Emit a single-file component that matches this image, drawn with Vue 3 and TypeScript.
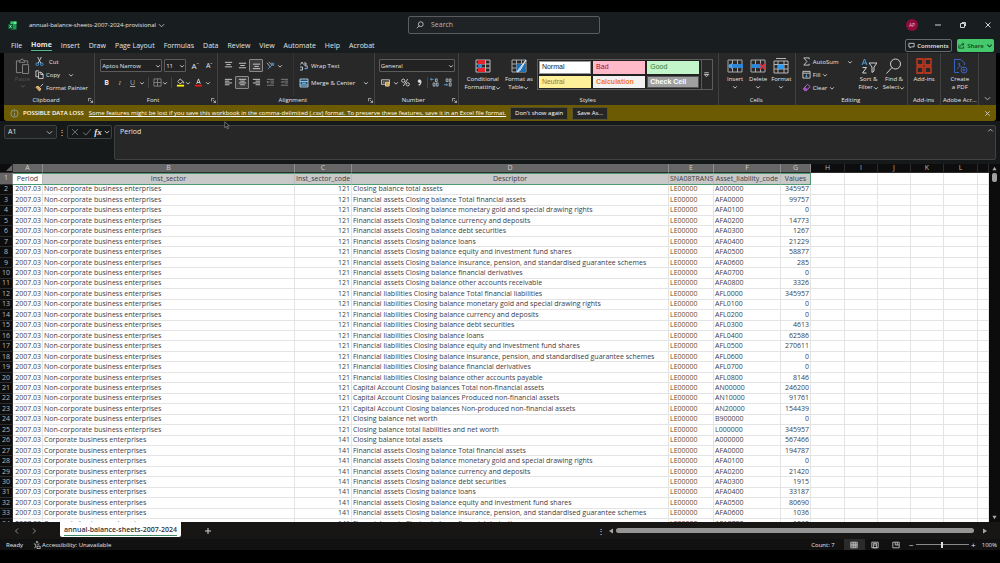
<script setup lang="ts">
import { ref } from 'vue'

interface Row {
  sector: string
  code: number
  text: string
  account: string
  value: number
}

const menus: string[] = ['File', 'Home', 'Insert', 'Draw', 'Page Layout', 'Formulas', 'Data', 'Review', 'View', 'Automate', 'Help', 'Acrobat']
const styles: string[] = ['Normal', 'Bad', 'Good', 'Neutral', 'Calculation', 'Check Cell']
const columns: string[] = ['A', 'B', 'C', 'D', 'E', 'F', 'G', 'H', 'I', 'J', 'K', 'L', '']
const headings: string[] = ['Period', 'Inst_sector', 'Inst_sector_code', 'Descriptor', 'SNA08TRANS', 'Asset_liability_code', 'Values']
const blanks = 6

const entries: [string, string, number][] = [
  ['Closing balance total assets', 'A000000', 345957],
  ['Financial assets Closing balance Total financial assets', 'AFA0000', 99757],
  ['Financial assets Closing balance monetary gold and special drawing rights', 'AFA0100', 0],
  ['Financial assets Closing balance currency and deposits', 'AFA0200', 14773],
  ['Financial assets Closing balance debt securities', 'AFA0300', 1267],
  ['Financial assets Closing balance loans', 'AFA0400', 21229],
  ['Financial assets Closing balance equity and investment fund shares', 'AFA0500', 58877],
  ['Financial assets Closing balance insurance, pension, and standardised guarantee schemes', 'AFA0600', 285],
  ['Financial assets Closing balance financial derivatives', 'AFA0700', 0],
  ['Financial assets Closing balance other accounts receivable', 'AFA0800', 3326],
  ['Financial liabilities Closing balance Total financial liabilities', 'AFL0000', 345957],
  ['Financial liabilities Closing balance monetary gold and special drawing rights', 'AFL0100', 0],
  ['Financial liabilities Closing balance currency and deposits', 'AFL0200', 0],
  ['Financial liabilities Closing balance debt securities', 'AFL0300', 4613],
  ['Financial liabilities Closing balance loans', 'AFL0400', 62586],
  ['Financial liabilities Closing balance equity and investment fund shares', 'AFL0500', 270611],
  ['Financial liabilities Closing balance insurance, pension, and standardised guarantee schemes', 'AFL0600', 0],
  ['Financial liabilities Closing balance financial derivatives', 'AFL0700', 0],
  ['Financial liabilities Closing balance other accounts payable', 'AFL0800', 8146],
  ['Capital Account Closing balances Total non-financial assets', 'AN00000', 246200],
  ['Capital Account Closing balances Produced non-financial assets', 'AN10000', 91761],
  ['Capital Account Closing balances Non-produced non-financial assets', 'AN20000', 154439],
  ['Closing balance net worth', 'B900000', 0],
  ['Closing balance total liabilities and net worth', 'L000000', 345957],
]
const corporateValues: number[] = [567466, 194787, 0, 21420, 1915, 33187, 80690, 1036, 1060]

const rows: Row[] = [
  ...entries.map(([text, account, value]) => ({ sector: 'Non-corporate business enterprises', code: 121, text, account, value })),
  ...corporateValues.map((value, i) => ({ sector: 'Corporate business enterprises', code: 141, text: entries[i][0], account: entries[i][1], value })),
]

const activeMenu = ref('Home')
const font = ref('Aptos Narrow')
const size = ref('11')
const format = ref('General')
const zoom = ref(50)
const showWarning = ref(true)
</script>

<template>
  <div class="app">
    <header class="title">
      <div class="doc">
        <svg class="logo" viewBox="0 0 18 18"><path d="M5 1h12v16H5z" fill="#1f9a55" stroke="none" /><path d="M11 1h6v5h-6z" fill="#6fe79a" stroke="none" /><path d="M5 1h6v5H5z" fill="#2fc46d" stroke="none" /><path d="M0 6h10v10H0z" fill="#0c5c33" stroke="none" /><path d="M3 8.500l4 5M7 8.500l-4 5" stroke="#d9ffe6" stroke-width="1.500" /></svg>
        <h1>annual-balance-sheets-2007-2024-provisional</h1>
        <svg class="chev big" viewBox="0 0 8 8"><path d="M1 2.500l3 3 3-3" /></svg>
      </div>
      <label class="search">
        <svg viewBox="0 0 10 10"><circle cx="6" cy="4" r="3" /><path d="M4 6L1 9" /></svg>
        <input type="text" placeholder="Search" aria-label="Search" />
      </label>
      <div class="window">
        <span class="avatar">AP</span>
        <button aria-label="Minimise"><svg viewBox="0 0 8 8"><path d="M1 4h6" /></svg></button>
        <button aria-label="Restore"><svg viewBox="0 0 8 8"><path d="M1.500 2.500h4v4h-4zM3 1.500h3.500V5" /></svg></button>
        <button aria-label="Close"><svg viewBox="0 0 8 8"><path d="M1.500 1.500l5 5M6.500 1.500l-5 5" /></svg></button>
      </div>
    </header>

    <nav class="menu">
      <button v-for="m in menus" :key="m" :class="{ on: m === activeMenu }" @click="activeMenu = m">{{ m }}</button>
      <span class="spring"></span>
      <button class="comments"><svg viewBox="0 0 8 8"><path d="M1 1.500h6v4H4L2.500 7V5.500H1z" /></svg>Comments</button>
      <button class="share"><svg viewBox="0 0 8 8"><path d="M1 3v4h5.500V5M3 5c0-2 1-2.500 3-2.500M5 1l2 1.500L5 4" /></svg>Share<svg class="chev" viewBox="0 0 8 8"><path d="M1.500 3l2.500 2.500L6.500 3" /></svg></button>
    </nav>

    <section class="ribbon">
      <div class="group g-clip">
        <div class="body clip">
          <button class="paste">
            <svg viewBox="0 0 16 18"><path d="M4 3H1.500v12.500H7M11 3h2.500v3M4.500 4.500v-2H6c0-2 3-2 3 0h1.500v2zM8 7h6.500v9.500H8z" /></svg>
            <span>Paste</span>
            <svg class="chev" viewBox="0 0 8 8"><path d="M1.500 3l2.500 2.500L6.500 3" /></svg>
          </button>
          <div class="list">
            <button class="cut"><svg viewBox="0 0 10 10"><path d="M3 0l3.500 7M7 0L3.500 7" /><g stroke="#4a9ee0"><circle cx="2.500" cy="8" r="1.500" /><circle cx="7.500" cy="8" r="1.500" /></g></svg>Cut</button>
            <button><svg viewBox="0 0 10 10"><path d="M4 7.500H1V1h3.500M4 2.500h3L9 4.500v5H4zM6.500 2.500v2.500H9" /></svg>Copy<svg class="chev gap" viewBox="0 0 8 8"><path d="M1.500 3l2.500 2.500L6.500 3" /></svg></button>
            <button><svg viewBox="0 0 10 10"><path d="M9 1L6 4M3.500 3.500l3 3" /><path d="M3.500 3.500L1 4.500 5 9l1.500-2.500z" fill="#e6a24a" stroke="#e8c08a" /></svg>Format Painter</button>
          </div>
        </div>
        <footer><span>Clipboard</span><svg class="launch" viewBox="0 0 6 6"><path d="M.5 4V.5H4M2.500 2.500l3 3M5.500 3v2.500H3" /></svg></footer>
      </div>

      <div class="group g-font">
        <div class="body rows2">
          <div class="line">
            <span class="pick w62"><select v-model="font" aria-label="Font"><option>Aptos Narrow</option></select><svg class="chev" viewBox="0 0 8 8"><path d="M1.500 3l2.500 2.500L6.500 3" /></svg></span>
            <span class="pick w22"><select v-model="size" aria-label="Font size"><option>11</option></select><svg class="chev" viewBox="0 0 8 8"><path d="M1.500 3l2.500 2.500L6.500 3" /></svg></span>
            <button class="cell w14 grow" aria-label="Increase font size">A<sup>ˆ</sup></button>
            <button class="cell w14 shrink" aria-label="Decrease font size">A<sup>ˇ</sup></button>
          </div>
          <div class="line">
            <button class="cell w13 bold">B</button>
            <button class="cell w13 ital">I</button>
            <button class="cell w13 under">U</button>
            <svg class="chev" viewBox="0 0 8 8"><path d="M1.500 3l2.500 2.500L6.500 3" /></svg>
            <i class="bar"></i>
            <button class="cell w10" aria-label="Borders"><svg viewBox="0 0 10 10" class="dim"><path d="M1 1h8v8H1zM5 1v8M1 5h8" /></svg></button>
            <svg class="chev" viewBox="0 0 8 8"><path d="M1.500 3l2.500 2.500L6.500 3" /></svg>
            <i class="bar"></i>
            <button class="cell w10" aria-label="Fill colour"><svg viewBox="0 0 10 10"><path d="M4.500 1L8 4 4.500 6.500 2 4zM8.500 4v2" /><path d="M1 7.500h8v2H1z" fill="#fff200" stroke="none" /></svg></button>
            <svg class="chev" viewBox="0 0 8 8"><path d="M1.500 3l2.500 2.500L6.500 3" /></svg>
            <button class="cell w14" aria-label="Font colour"><svg viewBox="0 0 10 10"><path d="M3 6.500L5 1l2 5.500M3.500 5h3" /><path d="M1 7.500h8v2H1z" fill="#f01414" stroke="none" /></svg></button>
            <svg class="chev" viewBox="0 0 8 8"><path d="M1.500 3l2.500 2.500L6.500 3" /></svg>
          </div>
        </div>
        <footer><span>Font</span><svg class="launch" viewBox="0 0 6 6"><path d="M.5 4V.5H4M2.500 2.500l3 3M5.500 3v2.500H3" /></svg></footer>
      </div>

      <div class="group g-align">
        <div class="body align">
          <div class="rows2">
            <div class="line">
              <button class="cell w14" aria-label="Top align"><svg viewBox="0 0 10 10"><path d="M1 1.500h8M2.500 4h5M1 6.500h8" /></svg></button>
              <button class="cell w14" aria-label="Middle align"><svg viewBox="0 0 10 10"><path d="M1 2.500h8M2.500 5h5M1 7.500h8" /></svg></button>
              <button class="cell w14 sel" aria-label="Bottom align"><svg viewBox="0 0 10 10"><path d="M1 3.500h8M2.500 6h5M1 8.500h8" /></svg></button>
              <button class="cell w14" aria-label="Orientation"><svg viewBox="0 0 10 10"><path d="M1 2l4 5M3 1l4 4" stroke="#9fb4c4" /><path d="M2 9l6-6M5.500 2.500H8.500V5.500" stroke="#5b9bd0" /></svg></button>
              <svg class="chev" viewBox="0 0 8 8"><path d="M1.500 3l2.500 2.500L6.500 3" /></svg>
            </div>
            <div class="line">
              <button class="cell w14" aria-label="Align left"><svg viewBox="0 0 10 10"><path d="M1 1.500h8M1 3.500h5M1 5.500h8M1 7.500h5" /></svg></button>
              <button class="cell w14 sel" aria-label="Centre"><svg viewBox="0 0 10 10"><path d="M1 1.500h8M2.500 3.500h5M1 5.500h8M2.500 7.500h5" /></svg></button>
              <button class="cell w14" aria-label="Align right"><svg viewBox="0 0 10 10"><path d="M1 1.500h8M4 3.500h5M1 5.500h8M4 7.500h5" /></svg></button>
              <button class="cell w14" aria-label="Decrease indent"><svg viewBox="0 0 10 10" class="dim"><path d="M1 1.500h8M5 3.500h4M5 5.500h4M1 8h8M4 4.500H1M2 3.500l-1 1 1 1" /></svg></button>
              <button class="cell w14" aria-label="Increase indent"><svg viewBox="0 0 10 10" class="dim"><path d="M1 1.500h8M5 3.500h4M5 5.500h4M1 8h8M1 4.500h3M3 3.500l1 1-1 1" /></svg></button>
            </div>
          </div>
          <div class="rows2 wrap">
            <button class="line txt"><svg viewBox="0 0 10 10"><path d="M1.500 3.500L3 1l1.500 2.500M1 6h2.500v3H1M6 1v4h2M8 3H6" stroke="#b8c4cc" /><path d="M6 7.500h2.500V4.500M7 6.500l-1 1 1 1" stroke="#5b9bd0" /></svg>Wrap Text</button>
            <button class="line txt"><svg viewBox="0 0 10 10"><path d="M1 1h8v8H1z" fill="#23506f" stroke="#a8bccb" /><path d="M1 3.500h8M1 7h8M3 5.200h4" stroke="#8fc1e6" /></svg>Merge &amp; Center<svg class="chev gap" viewBox="0 0 8 8"><path d="M1.500 3l2.500 2.500L6.500 3" /></svg></button>
          </div>
        </div>
        <footer><span>Alignment</span><svg class="launch" viewBox="0 0 6 6"><path d="M.5 4V.5H4M2.500 2.500l3 3M5.500 3v2.500H3" /></svg></footer>
      </div>

      <div class="group g-num">
        <div class="body rows2">
          <div class="line">
            <span class="pick w76"><select v-model="format" aria-label="Number format"><option>General</option></select><svg class="chev" viewBox="0 0 8 8"><path d="M1.500 3l2.500 2.500L6.500 3" /></svg></span>
          </div>
          <div class="line">
            <button class="cell w14" aria-label="Accounting format"><svg viewBox="0 0 10 10"><path d="M.5 2h9v5h-9zM2 4.500h2" /><path d="M5 4.500h4v4.500H5z" fill="#caa35a" stroke="#e5c98c" /></svg></button>
            <svg class="chev" viewBox="0 0 8 8"><path d="M1.500 3l2.500 2.500L6.500 3" /></svg>
            <button class="cell w14" aria-label="Percent style"><svg viewBox="0 0 10 10"><circle cx="2.500" cy="3" r="1.800" /><circle cx="7.500" cy="7" r="1.800" /><path d="M7.500 1L2.500 9" /></svg></button>
            <button class="cell w14" aria-label="Comma style"><svg viewBox="0 0 10 10"><circle cx="5" cy="3.500" r="1.500" fill="#e8e8e8" /><path d="M6.500 3.500C6.500 6 5.500 7.500 4 8" stroke-width="1.500" /></svg></button>
            <i class="bar"></i>
            <button class="cell w13" aria-label="Increase decimal"><svg viewBox="0 0 10 10"><path d="M4 1.500H.5M2 .5l-1.500 1 1.500 1" stroke="#5b9bd0" /><path d="M6 1h2v3H6zM3.500 5.500h2V9h-2zM7 5.500h2V9H7z" stroke="#a9bac6" /></svg></button>
            <button class="cell w13" aria-label="Decrease decimal"><svg viewBox="0 0 10 10"><path d="M1 7.500h4M3.500 6.500l1.500 1-1.500 1" stroke="#5b9bd0" /><path d="M3.500 1h2v3h-2zM7 1h2v3H7zM7 5.500h2V9H7z" stroke="#a9bac6" /></svg></button>
          </div>
        </div>
        <footer><span>Number</span><svg class="launch" viewBox="0 0 6 6"><path d="M.5 4V.5H4M2.500 2.500l3 3M5.500 3v2.500H3" /></svg></footer>
      </div>

      <div class="group g-style">
        <div class="body styles">
          <button class="tall w36"><svg viewBox="0 0 16 16"><path d="M1 2h14v12H1zM1 6h14M1 10h14M5.500 2v12M10.500 2v12" stroke="#b9b9b9" /><path d="M3 2h7v4H3zM3 10h7v4H3z" fill="#e8252f" stroke="none" /><path d="M3 6.500h4v3H3z" fill="#2f86d6" stroke="none" /></svg><span>Conditional</span><span>Formatting<svg class="chev" viewBox="0 0 8 8"><path d="M1.500 3l2.500 2.500L6.500 3" /></svg></span></button>
          <button class="tall w36"><svg viewBox="0 0 16 16"><path d="M1 2h14v12H1zM1 6h14M1 10h14M5.500 2v12M10.500 2v12" stroke="#a9a9a9" /><path d="M5.500 6h9v8h-9z" fill="#1f6fb5" stroke="none" /><path d="M15 2L8 11l-2 3 3-1.500z" fill="#6db6ee" stroke="#d8e8f4" /></svg><span>Format as</span><span>Table<svg class="chev" viewBox="0 0 8 8"><path d="M1.500 3l2.500 2.500L6.500 3" /></svg></span></button>
          <div class="gallery">
            <div class="swatches"><button v-for="s in styles" :key="s" :class="s.toLowerCase().replace(' ', '-')">{{ s }}</button></div>
            <button class="more" aria-label="More styles"><svg viewBox="0 0 8 8"><path d="M1.500 2h5M1.500 4l2.500 2.500L6.500 4z" /></svg></button>
          </div>
        </div>
        <footer><span>Styles</span></footer>
      </div>

      <div class="group g-cells">
        <div class="body trio">
          <button class="tall"><svg viewBox="0 0 16 16"><path d="M1 2h14v12H1zM5.500 2v12M10.500 2v12" stroke="#a9a9a9" /><path d="M2 6h14v4H2z" fill="#2f86d6" stroke="none" /><path d="M5 5L1 8l4 3z" fill="#4fa6ef" stroke="none" /></svg><span>Insert</span><svg class="chev" viewBox="0 0 8 8"><path d="M1.500 3l2.500 2.500L6.500 3" /></svg></button>
          <button class="tall"><svg viewBox="0 0 16 16"><path d="M1 2h14v12H1zM5.500 2v12M10.500 2v12" stroke="#a9a9a9" /><path d="M1 6h10v4H1z" fill="#2f86d6" stroke="none" /><path d="M10 6l5 5M15 6l-5 5" stroke="#e0303a" stroke-width="1.800" /></svg><span>Delete</span><svg class="chev" viewBox="0 0 8 8"><path d="M1.500 3l2.500 2.500L6.500 3" /></svg></button>
          <button class="tall"><svg viewBox="0 0 16 16"><path d="M1 3h14v12H1zM1 6.500h14M1 11h14M5 3v12M11 3v12M3 .5h10" stroke="#b5b5b5" /><path d="M5 6.500h6V11H5z" fill="#2f9cf4" stroke="none" /></svg><span>Format</span><svg class="chev" viewBox="0 0 8 8"><path d="M1.500 3l2.500 2.500L6.500 3" /></svg></button>
        </div>
        <footer><span>Cells</span></footer>
      </div>

      <div class="group g-edit">
        <div class="body edit">
          <div class="list">
            <button><svg viewBox="0 0 10 10"><path d="M8 2.500V1H2l3.500 4L2 9h6V7.500" /></svg>AutoSum<svg class="chev gap" viewBox="0 0 8 8"><path d="M1.500 3l2.500 2.500L6.500 3" /></svg></button>
            <button><svg viewBox="0 0 10 10"><path d="M1 1.500h8v7.500H1zM1 3.500h8" /><path d="M5 4.500V8M3.500 6.500L5 8l1.500-1.500" stroke="#5b9bd0" /></svg>Fill<svg class="chev" viewBox="0 0 8 8"><path d="M1.500 3l2.500 2.500L6.500 3" /></svg></button>
            <button><svg viewBox="0 0 10 10"><path d="M1.500 6.500L6 1.500 9 4 5 8.500H3z" stroke="#c56bd8" /><path d="M1.500 6.500L3.500 4.500 6.500 7 5 8.500H3z" fill="#a64fc0" stroke="none" /></svg>Clear<svg class="chev" viewBox="0 0 8 8"><path d="M1.500 3l2.500 2.500L6.500 3" /></svg></button>
          </div>
          <button class="tall"><svg viewBox="0 0 16 16"><path d="M1 7l2.500-6L6 7M2 5h3" stroke="#4a9ee0" /><path d="M1.500 9.500h4l-4 5.500h4M8 5h8l-3 4v4l-2 1.500V9z" /></svg><span>Sort &amp;</span><span>Filter<svg class="chev" viewBox="0 0 8 8"><path d="M1.500 3l2.500 2.500L6.500 3" /></svg></span></button>
          <button class="tall"><svg viewBox="0 0 16 16"><circle cx="9.500" cy="6" r="5" /><path d="M6 9.500L.5 15.500" /></svg><span>Find &amp;</span><span>Select<svg class="chev" viewBox="0 0 8 8"><path d="M1.500 3l2.500 2.500L6.500 3" /></svg></span></button>
        </div>
        <footer><span>Editing</span></footer>
      </div>

      <div class="group g-add">
        <div class="body">
          <button class="tall"><svg viewBox="0 0 16 16"><path d="M1 1h6v6H1zM9 1h6v6H9zM1 9h6v6H1zM9 9h6v6H9z" stroke="#d83b1c" stroke-width="1.300" /></svg><span>Add-ins</span></button>
        </div>
        <footer><span>Add-ins</span></footer>
      </div>

      <div class="group g-pdf">
        <div class="body">
          <button class="tall"><svg viewBox="0 0 16 16"><path d="M7 14.500H2.500v-13H9l3.500 3.500v2M5 11c3-2 3-6 2-6s1 5 5 4.500" stroke="#3b63b8" /><circle cx="12" cy="12" r="3" stroke="#3b63b8" /><path d="M12 10.500v3M10.500 12h3" stroke="#3b63b8" /></svg><span>Create</span><span>a PDF</span></button>
        </div>
        <footer><span>Adobe Acr...</span></footer>
      </div>
      <button class="fold" aria-label="Collapse ribbon"><svg class="chev big" viewBox="0 0 8 8"><path d="M1 2.500l3 3 3-3" /></svg></button>
    </section>

    <section v-if="showWarning" class="warning">
      <svg class="info" viewBox="0 0 10 10"><circle cx="5" cy="5" r="4" /><path d="M5 4.500V7.500M5 2.500v1" /></svg>
      <strong>POSSIBLE DATA LOSS</strong>
      <a href="#">Some features might be lost if you save this workbook in the comma-delimited (.csv) format. To preserve these features, save it in an Excel file format.</a>
      <button class="w58">Don't show again</button>
      <button class="w36">Save As...</button>
      <span class="spring"></span>
      <button class="plain" aria-label="Dismiss" @click="showWarning = false"><svg viewBox="0 0 8 8"><path d="M1.500 1.500l5 5M6.500 1.500l-5 5" /></svg></button>
    </section>

    <section class="formula">
      <button class="namebox"><span>A1</span><svg class="chev big" viewBox="0 0 8 8"><path d="M1 2.500l3 3 3-3" /></svg></button>
      <span class="dots">⋮</span>
      <div class="fx">
        <svg class="off" viewBox="0 0 10 10"><path d="M2 2l6 6M8 2L2 8" /></svg>
        <svg class="off" viewBox="0 0 10 10"><path d="M1 5.500L4 8l5-6" /></svg>
        <em>fx</em>
        <svg class="chev" viewBox="0 0 8 8"><path d="M1 2.500l3 3 3-3" /></svg>
      </div>
      <div class="input">
        <textarea aria-label="Formula bar">Period</textarea>
        <svg class="chev big" viewBox="0 0 8 8"><path d="M1.500 5l2.500-2.500L6.500 5" /></svg>
      </div>
      <svg class="cursor" viewBox="0 0 8 12"><path d="M1 1v8l2-2 1.500 3.500L6 10 4.500 6.500H7z" fill="#111" stroke="#8a8a8a" /></svg>
    </section>

    <main class="sheet">
      <div class="pane">
        <table>
          <colgroup>
            <col class="c0" /><col class="ca" /><col class="cb" /><col class="cc" /><col class="cd" /><col class="ce" /><col class="cf" /><col class="ca" />
            <col class="ch" /><col class="ci" /><col class="ci" /><col class="ci" /><col class="ch" /><col />
          </colgroup>
          <thead>
            <tr>
              <th class="corner"><svg viewBox="0 0 8 8"><path d="M8 0v8H0z" /></svg></th>
              <th v-for="(c, i) in columns" :key="i" :class="{ picked: i < 7 }">{{ c }}</th>
            </tr>
          </thead>
          <tbody>
            <tr class="first">
              <th class="picked">1</th>
              <td v-for="(h, i) in headings" :key="h" :class="{ active: i === 0, end: i === 6 }">{{ h }}</td>
              <td v-for="n in blanks" :key="n" class="blank"></td>
            </tr>
            <tr v-for="(r, i) in rows" :key="i">
              <th>{{ i + 2 }}</th>
              <td class="num">2007.03</td>
              <td>{{ r.sector }}</td>
              <td class="num">{{ r.code }}</td>
              <td>{{ r.text }}</td>
              <td class="le">LE00000</td>
              <td>{{ r.account }}</td>
              <td class="num">{{ r.value }}</td>
              <td v-for="n in blanks" :key="n"></td>
            </tr>
          </tbody>
        </table>
      </div>
      <div class="vscroll">
        <svg viewBox="0 0 6 6"><path d="M3 1l2.500 4h-5z" /></svg>
        <i></i>
        <span class="spring"></span>
        <svg viewBox="0 0 6 6"><path d="M3 5l2.500-4h-5z" /></svg>
      </div>
    </main>

    <section class="tabs">
      <div class="tabset">
        <button class="arrow" aria-label="Previous sheet"><svg viewBox="0 0 8 8"><path d="M5 1.500L2.500 4 5 6.500" /></svg></button>
        <button class="arrow" aria-label="Next sheet"><svg viewBox="0 0 8 8"><path d="M3 1.500L5.500 4 3 6.500" /></svg></button>
        <button class="tab"><span>annual-balance-sheets-2007-2024</span></button>
        <button class="plus" aria-label="New sheet"><svg viewBox="0 0 8 8"><path d="M4 1v6M1 4h6" /></svg></button>
      </div>
      <div class="hscroll">
        <span class="dots">⋮</span>
        <svg viewBox="0 0 6 6"><path d="M5 .5v5L1 3z" /></svg>
        <i></i>
        <svg viewBox="0 0 6 6"><path d="M1 .5v5L5 3z" /></svg>
      </div>
    </section>

    <footer class="status">
      <span class="ready">Ready</span>
      <svg class="acc" viewBox="0 0 10 10"><circle cx="5" cy="1.500" r="1" /><path d="M1 3.500l2.500.8v2L2 9M8 3.500l-2 .8V5M5 6.500h4v3H5z" /></svg>
      <span>Accessibility: Unavailable</span>
      <span class="spring"></span>
      <span class="count">Count: 7</span>
      <button class="view on" aria-label="Normal view"><svg viewBox="0 0 10 10"><path d="M1 1.500h8v7H1zM1 4h8M1 6h8M4 1.500v7M6.500 1.500v7" /></svg></button>
      <button class="view" aria-label="Page layout view"><svg viewBox="0 0 10 10"><path d="M1 1.500h8v7H1zM3 3h4v5.500H3zM3.500 5h3" /></svg></button>
      <button class="view" aria-label="Page break view"><svg viewBox="0 0 10 10"><path d="M1 1.500h8v7H1zM4 1.500V5h5M6.500 1.500V5" /></svg></button>
      <span class="sign">−</span>
      <input v-model="zoom" type="range" min="0" max="100" aria-label="Zoom" />
      <span class="sign">+</span>
      <span class="pct">100%</span>
    </footer>
  </div>
</template>

<style>
html, body { margin: 0; background: #000; }
</style>

<style scoped>
* { box-sizing: border-box; }
.app { height: 100vh; display: flex; flex-direction: column; padding: 12px 0 13px; overflow: hidden; background: #000; color: #e6e6e6; font: 6px/8px "Open Sans", "Noto Sans", sans-serif; }
button { display: flex; align-items: center; justify-content: center; border: 0; margin: 0; padding: 0; background: none; color: inherit; font: inherit; white-space: nowrap; }
svg { flex: none; display: block; fill: none; stroke: #d2d2d2; width: 10px; height: 10px; }
.chev { width: 6px; height: 6px; stroke: #c4c4c4; stroke-width: 1.3; }
.chev.big { width: 7px; height: 7px; stroke-width: 1; }
.spring { flex: 1; }
.dim { stroke: #858585; }

.title { flex: none; height: 26px; display: grid; grid-template-columns: 1fr 192px 1fr; align-items: center; padding-left: 8px; background: #181d1f; }
.doc { display: flex; align-items: center; }
.logo { width: 9px; height: 9px; }
h1 { margin: 0 2px 0 12px; font-size: 6px; font-weight: 400; line-height: 8px; white-space: nowrap; }
.search { height: 18px; display: flex; align-items: center; gap: 7px; padding: 0 7px; border: 1px solid #5a5d5f; border-radius: 2px; background: #202325; }
.search svg { width: 8px; height: 8px; }
.search input { flex: 1; min-width: 0; border: 0; padding: 0; background: none; font: inherit; font-size: 7px; color: #ccc; }
.search input::placeholder { color: #b5b5b5; }
.window { display: flex; justify-content: flex-end; align-items: center; }
.window button { width: 25px; height: 18px; }
.window svg { width: 8px; height: 8px; }
.avatar { width: 12px; height: 12px; border-radius: 50%; margin-right: 7px; background: #8e0d38; color: #f3b7ca; font-size: 5px; line-height: 12px; text-align: center; }

.menu { flex: none; height: 15px; display: flex; align-items: center; gap: 9px; padding: 0 6px 0 11px; background: #181d1f; }
.menu button { height: 11px; font-size: 7px; line-height: 10px; }
.menu .on { font-weight: 700; border-bottom: 1px solid #55b98a; }
.menu svg { width: 7px; height: 7px; }
.menu .comments { height: 13px; width: 47px; gap: 2px; border: 1px solid #66696b; border-radius: 2px; font-size: 6px; font-weight: 600; }
.menu .share { height: 13px; width: 37px; gap: 2px; margin-left: -4px; background: #46c96c; color: #0e4224; border-radius: 2px; font-size: 6px; font-weight: 600; }
.menu .share svg { stroke: #0e4224; }

.ribbon { flex: none; height: 52px; display: flex; margin: 0 4px; background: #282828; font-weight: 500; }
.group { min-width: 0; display: flex; flex-direction: column; border-right: 1px solid #414141; }
.g-clip { flex: 91 1 0; } .g-font { flex: 123 1 0; } .g-align { flex: 157 1 0; } .g-num { flex: 84 1 0; }
.g-style { flex: 261 1 0; } .g-cells { flex: 77 1 0; } .g-edit { flex: 112 1 0; } .g-add { flex: 33 1 0; } .g-pdf { flex: 37 1 0; }
.group footer { height: 10px; display: flex; align-items: center; padding-right: 1px; }
.group footer span { flex: 1; text-align: center; font-size: 6px; white-space: nowrap; }
.g-pdf footer { padding: 0; }
.launch { width: 5px; height: 5px; stroke: #bdbdbd; }
.body { flex: 1; display: flex; min-height: 0; }
.clip { gap: 4px; padding-left: 10px; }
.paste { width: 17px; flex-direction: column; justify-content: flex-start; padding-top: 5px; color: #555; }
.paste > svg:first-child { width: 15px; height: 17px; stroke: #888; }
.paste .chev { stroke: #555; }
.list { display: grid; grid-template-rows: repeat(3, 13px); padding-top: 2px; justify-items: start; }
.list button { gap: 2px; }
.list .cut { gap: 5px; }
.list svg:first-child { width: 9px; height: 9px; }
.gap, .list .gap { margin-left: 6px; }
.rows2 { display: flex; flex-direction: column; gap: 4px; padding-top: 6px; }
.line { height: 13px; display: flex; align-items: center; }
.g-font .rows2 { padding-left: 5px; }
.pick { height: 13px; display: grid; align-items: center; border: 1px solid #5c5c5c; border-radius: 1px; margin-right: 2px; }
.pick > * { grid-area: 1 / 1; }
.pick select { appearance: none; width: 100%; height: 11px; border: 0; padding: 0 1px; background: #222; color: #e6e6e6; font: inherit; }
.pick .chev { justify-self: end; pointer-events: none; }
.w62 { width: 62px; } .w22 { width: 22px; } .w76 { width: 76px; }
.cell { height: 13px; }
.w10 { width: 10px; } .w13 { width: 13px; } .w14 { width: 14px; }
.cell svg { width: 9px; height: 9px; }
.grow { font-size: 8px; } .shrink { font-size: 7px; }
sup { font-size: 5px; line-height: 1; }
.bold { font-weight: 700; font-size: 7px; } .ital { font: italic 7px "Liberation Serif", serif; color: #aaa; } .under { text-decoration: underline; font-size: 7px; color: #aaa; }
.bar { width: 1px; height: 11px; background: #444; margin: 0 3px; }
.g-num .bar { margin: 0; }
.sel { border: 1px solid #8a8a8a; background: #3c3c3c; border-radius: 1px; }
.align { padding-left: 3px; gap: 2px; }
.wrap .txt { gap: 2px; align-self: flex-start; }
.align .wrap { border-left: 1px solid #333; padding-left: 5px; }
.g-num .rows2 { padding-left: 4px; }
.tall { flex: 1; min-width: 0; flex-direction: column; justify-content: flex-start; padding-top: 5px; }
.tall > svg:first-child { width: 16px; height: 16px; margin-bottom: 1px; }
.tall span { display: flex; align-items: center; }
.tall .chev { margin-top: 1px; }
.styles { padding-left: 6px; }
.styles .tall { flex: 0 0 36px; }
.gallery { flex: 1; display: flex; margin: 6px 5px 5px 0; border: 1px solid #5c5c5c; }
.swatches { flex: 1; display: grid; grid-template-columns: repeat(3, 1fr); gap: 2px; padding: 1px; background: #222; }
.swatches button { justify-content: flex-start; padding-left: 2px; font: 7px/10px "Liberation Sans", Arial, sans-serif; border: 1px solid transparent; }
.swatches .normal { background: #fff; color: #222; border-color: #999; }
.swatches .bad { background: #ffb9c8; color: #a3152f; }
.swatches .good { background: #c2f5ca; color: #2c7a38; }
.swatches .neutral { background: #fff09a; color: #a57716; }
.swatches .calculation { background: #f2f2f2; color: #f07d1a; font-weight: 700; }
.swatches .check-cell { background: #a0a0a0; color: #fff; border-color: #555; font-weight: 700; }
.more { width: 11px; border-left: 1px solid #5c5c5c; }
.more svg { width: 7px; height: 7px; }
.trio { padding: 0 2px 0 5px; }
.edit { padding-left: 6px; }
.edit .list { width: 54px; flex: none; }
.fold { flex: 17 1 0; align-items: flex-end; padding-bottom: 3px; }

.warning { flex: none; height: 16px; display: flex; align-items: center; margin: 0 4px; padding: 0 5px 0 6px; background: #6d5b04; border-radius: 0 0 3px 3px; color: #fff; }
.info { width: 9px; height: 9px; stroke: #8fa3a0; margin-right: 4px; }
.warning strong { font-weight: 600; margin-right: 5px; }
.warning a { color: inherit; white-space: nowrap; margin-right: 4px; }
.warning button { height: 13px; margin-right: 4px; background: #262626; border: 1px solid #56512f; border-radius: 1px; }
.w58 { width: 58px; } .w36 { width: 36px; }
.warning .plain { margin: 0; background: none; border: 0; }
.warning .plain svg { width: 7px; height: 7px; }

.formula { position: relative; flex: none; height: 43px; display: flex; align-items: flex-start; padding: 4px; background: #16191a; }
.namebox { width: 53px; height: 14px; justify-content: space-between; padding: 0 3px; border: 1px solid #3f4243; border-radius: 2px; background: #1f2122; font-size: 7px; }
.formula .dots { width: 10px; line-height: 14px; text-align: center; font-size: 8px; }
.fx { width: 45px; height: 14px; display: flex; align-items: center; justify-content: space-between; padding: 0 1px 0 2px; border: 1px solid #3f4243; border-radius: 2px; }
.fx em { font: italic 700 9px/10px "Liberation Serif", serif; }
.off { stroke: #6d6d6d; }
.input { flex: 1; height: 35px; display: flex; margin-left: 2px; padding: 1px; border: 1px solid #3f4243; border-radius: 2px; background: #272727; }
.input textarea { flex: 1; resize: none; border: 0; padding: 1px 4px; background: none; color: #e6e6e6; font: inherit; font-size: 7px; }
.cursor { position: absolute; left: 224px; top: 0; width: 6px; height: 9px; }

.sheet { flex: 1; min-height: 0; display: flex; background: #0c0c0c; }
.pane { flex: 1; min-width: 0; overflow: hidden; background: #fff; }
table { width: 100%; height: 366px; table-layout: fixed; border-collapse: separate; border-spacing: 0; color: #3c4047; font: 7px/8px "Open Sans", "Noto Sans", sans-serif; }
.c0 { width: 13px; } .ca { width: 30px; } .cb { width: 252px; } .cc { width: 57px; } .cd { width: 317px; } .ce { width: 45px; } .cf { width: 67px; } .ch { width: 34px; } .ci { width: 33px; }
th, td { padding: 0 1px; height: 9px; overflow: hidden; white-space: nowrap; border-right: 1px solid #e4e4e4; border-bottom: 1px solid #e4e4e4; }
th { padding: 0; background: #0d0d0d; color: #b8b8b8; font-weight: 400; border-color: #2c2c2c; text-align: center; }
.picked { background: #666; color: #d0d0d0; border-right-color: #8d8d8d; }
.corner svg { width: 6px; height: 6px; margin-left: auto; fill: #666; stroke: none; }
.num { text-align: right; }
.le { color: #6b4a2b; }
.first td { background: #c9c9c9; text-align: center; border-top: 1px solid #4c9a72; border-bottom: 1px solid #4c9a72; border-right-color: #bbb; }
.first td.active { background: #fff; }
.first td.end { border-right-color: #4c9a72; }
.first td.blank { background: #fff; border-color: #e4e4e4; border-top-color: #fff; }
.vscroll { width: 11px; display: flex; flex-direction: column; align-items: center; gap: 2px; padding: 2px 0; }
.vscroll svg, .hscroll svg { width: 5px; height: 5px; fill: #a8a8a8; stroke: none; }
.vscroll i { width: 5px; height: 9px; border-radius: 2px; background: #a0a0a0; }

.tabs { flex: none; height: 17px; display: flex; background: #181614; }
.tabset { flex: 601; display: flex; align-items: center; padding-left: 8px; }
.tabs svg { width: 8px; height: 8px; }
.arrow { width: 17px; }
.arrow svg { stroke: #8a8a8a; }
.tab { height: 15px; align-self: flex-start; margin: 0 23px 0 18px; padding: 0 4px; background: #fff; color: #333; border-radius: 0 0 2px 2px; font-size: 7px; font-weight: 600; }
.tab span { border-bottom: 1px solid #3f8a68; line-height: 11px; }
.hscroll { flex: 399; display: flex; align-items: center; gap: 2px; padding-right: 12px; }
.hscroll .dots { width: 9px; font-size: 8px; }
.tabs .hscroll svg { width: 6px; height: 6px; }
.hscroll i { flex: 1; height: 5px; margin-right: 6px; border-radius: 3px; background: #969696; }

.status { flex: none; height: 11px; display: flex; align-items: center; padding: 0 3px 0 6px; background: #111; }
.ready { margin-right: 10px; }
.acc { width: 8px; height: 8px; margin-right: 1px; }
.count { margin-right: 9px; }
.view { width: 21px; height: 11px; }
.view.on { background: #2b2b2b; }
.view svg { width: 8px; height: 8px; }
.sign { width: 9px; text-align: center; font-size: 8px; }
.status input { appearance: none; width: 53px; height: 7px; margin: 0; background: linear-gradient(#8a8a8a, #8a8a8a) center / 100% 1px no-repeat; }
.status input::-webkit-slider-thumb { appearance: none; width: 2px; height: 6px; background: #ddd; }
.pct { margin-left: 4px; }
</style>
